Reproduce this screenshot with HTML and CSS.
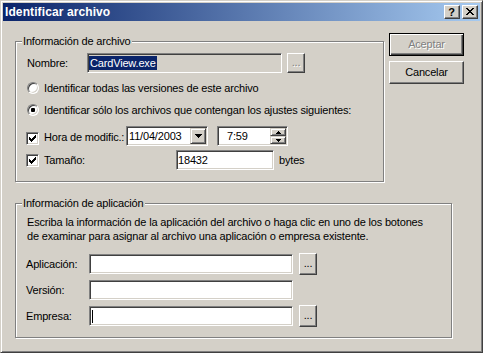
FILE: index.html
```html
<!DOCTYPE html>
<html lang="es">
<head>
<meta charset="utf-8">
<title>Identificar archivo</title>
<link rel="stylesheet" href="styles.css">
</head>
<body>
<div class="window">
  <div class="titlebar">
    <span class="title">Identificar archivo</span>
    <div class="tb-buttons">
      <span class="tbtn help">?</span>
      <span class="tbtn close"><svg width="8" height="7" viewBox="0 0 8 7" shape-rendering="crispEdges"><path fill="#000" d="M0 0h2v1h-2zM6 0h2v1h-2zM1 1h2v1h-2zM5 1h2v1h-2zM2 2h4v1h-4zM3 3h2v1h-2zM2 4h4v1h-4zM1 5h2v1h-2zM5 5h2v1h-2zM0 6h2v1h-2zM6 6h2v1h-2z"/></svg></span>
    </div>
  </div>
  <div class="client">
    <div class="top">
      <fieldset class="group g1">
        <legend>Información de archivo</legend>
        <div class="row r-name">
          <span class="lbl lbl-name">Nombre:</span>
          <div class="edit w-name"><span class="sel">CardView.exe</span></div>
          <div class="btn btn-dots btn-dots-name disabled">...</div>
        </div>
        <div class="row r-radio r-radio1">
          <span class="radio"></span><span>Identificar todas las versiones de este archivo</span>
        </div>
        <div class="row r-radio r-radio2">
          <span class="radio"><span class="dot"></span></span><span>Identificar sólo los archivos que contengan los ajustes siguientes:</span>
        </div>
        <div class="row r-hora">
          <span class="check"><svg width="7" height="7" viewBox="0 0 7 7" shape-rendering="crispEdges"><path fill="#000" d="M6 0h1v1h-1zM5 1h2v1h-2zM0 2h1v1h-1zM4 2h3v1h-3zM0 3h2v1h-2zM3 3h3v1h-3zM0 4h5v1h-5zM1 5h3v1h-3zM2 6h1v1h-1z"/></svg></span>
          <span class="lbl lbl-hora">Hora de modific.:</span>
          <div class="edit date">
            <span class="val">11/04/2003</span>
            <span class="ddbtn"><svg width="7" height="4" viewBox="0 0 7 4" shape-rendering="crispEdges"><path fill="#000" d="M0 0h7v1h-7zM1 1h5v1h-5zM2 2h3v1h-3zM3 3h1v1h-1z"/></svg></span>
          </div>
          <div class="edit time">
            <span class="val val-time">7:59</span>
            <span class="spin">
              <span class="spin-b"><svg width="5" height="3" viewBox="0 0 5 3" shape-rendering="crispEdges"><path fill="#000" d="M2 0h1v1h-1zM1 1h3v1h-3zM0 2h5v1h-5z"/></svg></span>
              <span class="spin-b"><svg width="5" height="3" viewBox="0 0 5 3" shape-rendering="crispEdges"><path fill="#000" d="M0 0h5v1h-5zM1 1h3v1h-3zM2 2h1v1h-1z"/></svg></span>
            </span>
          </div>
        </div>
        <div class="row r-tam">
          <span class="check"><svg width="7" height="7" viewBox="0 0 7 7" shape-rendering="crispEdges"><path fill="#000" d="M6 0h1v1h-1zM5 1h2v1h-2zM0 2h1v1h-1zM4 2h3v1h-3zM0 3h2v1h-2zM3 3h3v1h-3zM0 4h5v1h-5zM1 5h3v1h-3zM2 6h1v1h-1z"/></svg></span>
          <span class="lbl lbl-tam">Tamaño:</span>
          <div class="edit w-tam"><span class="val">18432</span></div>
          <span class="bytes">bytes</span>
        </div>
      </fieldset>
      <div class="buttons">
        <div class="btn push default disabled">Aceptar</div>
        <div class="btn push">Cancelar</div>
      </div>
    </div>
    <fieldset class="group g2">
      <legend>Información de aplicación</legend>
      <p class="desc">Escriba la información de la aplicación del archivo o haga clic en uno de los botones<br>de examinar para asignar al archivo una aplicación o empresa existente.</p>
      <div class="row r-app">
        <span class="lbl lbl-app">Aplicación:</span>
        <div class="edit w-app"></div>
        <div class="btn btn-dots">...</div>
      </div>
      <div class="row r-app r-next">
        <span class="lbl lbl-app">Versión:</span>
        <div class="edit w-app"></div>
      </div>
      <div class="row r-app r-next">
        <span class="lbl lbl-app">Empresa:</span>
        <div class="edit w-app"><span class="caret"></span></div>
        <div class="btn btn-dots">...</div>
      </div>
    </fieldset>
  </div>
</div>
</body>
</html>
```

FILE: styles.css
```css
* { box-sizing: border-box; }
html, body { margin: 0; padding: 0; }
body {
  width: 483px;
  height: 353px;
  overflow: hidden;
  background: #d4d0c8;
  font-family: "Liberation Sans", Arial, sans-serif;
  font-size: 11px;
  color: #000;
  letter-spacing: -0.17px;
}
.window {
  width: 483px;
  height: 353px;
  border: 1px solid;
  border-color: #d4d0c8 #404040 #404040 #d4d0c8;
  box-shadow: inset 1px 1px #fff, inset -1px -1px #808080;
  padding: 2px;
  background: #d4d0c8;
  display: flex;
  flex-direction: column;
}
.titlebar {
  height: 18px;
  flex: none;
  background: linear-gradient(to right, #0a246a, #a6caf0);
  display: flex;
  align-items: center;
  justify-content: space-between;
  padding: 0 2px;
}
.title {
  color: #fff;
  font-weight: bold;
  font-size: 12px;
  letter-spacing: 0.1px;
  line-height: 14px;
}
.tb-buttons { display: flex; gap: 2px; }
.tbtn {
  width: 16px;
  height: 14px;
  background: #d4d0c8;
  border: 1px solid;
  border-color: #fff #404040 #404040 #fff;
  box-shadow: inset -1px -1px #808080;
  display: flex;
  align-items: center;
  justify-content: center;
}
.help {
  font-weight: bold;
  font-size: 11px;
  line-height: 12px;
  letter-spacing: 0;
  padding-right: 1px;
}
.close svg { display: block; margin: 0 1px 1px 0; }

.client {
  flex: 1;
  padding: 12px 0 0 12px;
  display: flex;
  flex-direction: column;
}
.top { display: flex; align-items: flex-start; gap: 5px; }

.group {
  margin: 0;
  padding: 0;
  border: 1px solid #808080;
  box-shadow: inset 1px 1px #fff, 1px 1px #fff;
  min-width: 0;
}
.group legend {
  margin-left: 6px;
  padding: 0 1px;
  line-height: 13px;
  background: #d4d0c8;
}
.g1 { margin-top: 2px; width: 369px; height: 147px; }
.g2 { margin-top: 15px; width: 437px; height: 141px; }

.row { display: flex; align-items: center; flex: none; white-space: nowrap; }
.lbl { flex: none; line-height: 13px; }

.edit {
  flex: none;
  height: 20px;
  border: 1px solid;
  border-color: #808080 #fff #fff #808080;
  box-shadow: inset 1px 1px #404040, inset -1px -1px #d4d0c8;
  background: #fff;
  display: flex;
  align-items: center;
  padding: 0 1px;
  line-height: 13px;
}

.btn {
  flex: none;
  display: flex;
  align-items: center;
  justify-content: center;
  background: #d4d0c8;
  border: 1px solid;
  border-color: #fff #404040 #404040 #fff;
  box-shadow: inset -1px -1px #808080;
  line-height: 13px;
}
.btn.disabled { color: #808080; text-shadow: 1px 1px #fff; }
.btn-dots { width: 18px; height: 22px; margin-left: 6px; padding-bottom: 1px; }
.btn-dots-name { height: 20px; margin-left: 5px; }

/* group 1 */
.r-name { margin-top: 5px; height: 20px; padding-left: 11px; }
.lbl-name { width: 60px; }
.w-name { width: 195px; background: #d4d0c8; }
.sel { background: #0a246a; color: #fff; line-height: 14px; padding: 0 1px; }

.r-radio { height: 21px; padding-left: 11px; }
.r-radio1 { margin-top: 4px; }
.r-radio2 { margin-top: 1px; }
.radio {
  flex: none;
  width: 12px;
  height: 12px;
  border-radius: 50%;
  border: 1px solid;
  border-color: #808080 #fff #fff #808080;
  box-shadow: inset 1px 1px #404040, inset -1px -1px #d4d0c8;
  background: #fff;
  display: flex;
  align-items: center;
  justify-content: center;
  margin-right: 5px;
}
.dot { width: 4px; height: 4px; border-radius: 1px; background: #000; }

.check {
  flex: none;
  width: 13px;
  height: 13px;
  border: 1px solid;
  border-color: #808080 #fff #fff #808080;
  box-shadow: inset 1px 1px #404040, inset -1px -1px #d4d0c8;
  background: #fff;
  display: flex;
  align-items: center;
  justify-content: center;
  margin-right: 5px;
}
.check svg { display: block; }

.r-hora { margin-top: 6px; height: 20px; padding-left: 10px; align-items: flex-start; }
.r-hora .check { margin-top: 6px; }
.lbl-hora { width: 82px; margin-top: 5px; }
.date { width: 82px; padding: 1px 1px 1px 2px; justify-content: space-between; }
.ddbtn, .spin-b {
  display: flex;
  align-items: center;
  justify-content: center;
  background: #d4d0c8;
  border: 1px solid;
  border-color: #d4d0c8 #404040 #404040 #d4d0c8;
  box-shadow: inset 1px 1px #fff, inset -1px -1px #808080;
}
.ddbtn { width: 16px; height: 16px; }
.ddbtn svg, .spin-b svg { display: block; }
.time { width: 71px; margin-left: 9px; padding: 1px; justify-content: space-between; }
.val-time { padding-left: 8px; }
.spin { display: flex; flex-direction: column; width: 16px; height: 16px; }
.spin-b { height: 8px; }

.r-tam { margin-top: 4px; height: 20px; padding-left: 10px; align-items: flex-start; }
.r-tam .check { margin-top: 4px; }
.lbl-tam { width: 132px; margin-top: 4px; }
.w-tam { width: 98px; }
.bytes { margin-left: 5px; margin-top: 4px; line-height: 13px; }

/* buttons */
.buttons { display: flex; flex-direction: column; gap: 5px; }
.push { width: 75px; height: 23px; }
.push.default {
  border-color: #000;
  box-shadow: inset 1px 1px #fff, inset -1px -1px #404040, inset -2px -2px #808080;
}

/* group 2 */
.desc { margin: 5px 0 0; padding-left: 11px; line-height: 14px; white-space: nowrap; }
.r-app { margin-top: 11px; height: 20px; padding-left: 10px; }
.r-next { margin-top: 6px; }
.lbl-app { width: 63px; }
.w-app { width: 204px; }
.caret { width: 1px; height: 13px; background: #000; margin-left: 1px; }
```
